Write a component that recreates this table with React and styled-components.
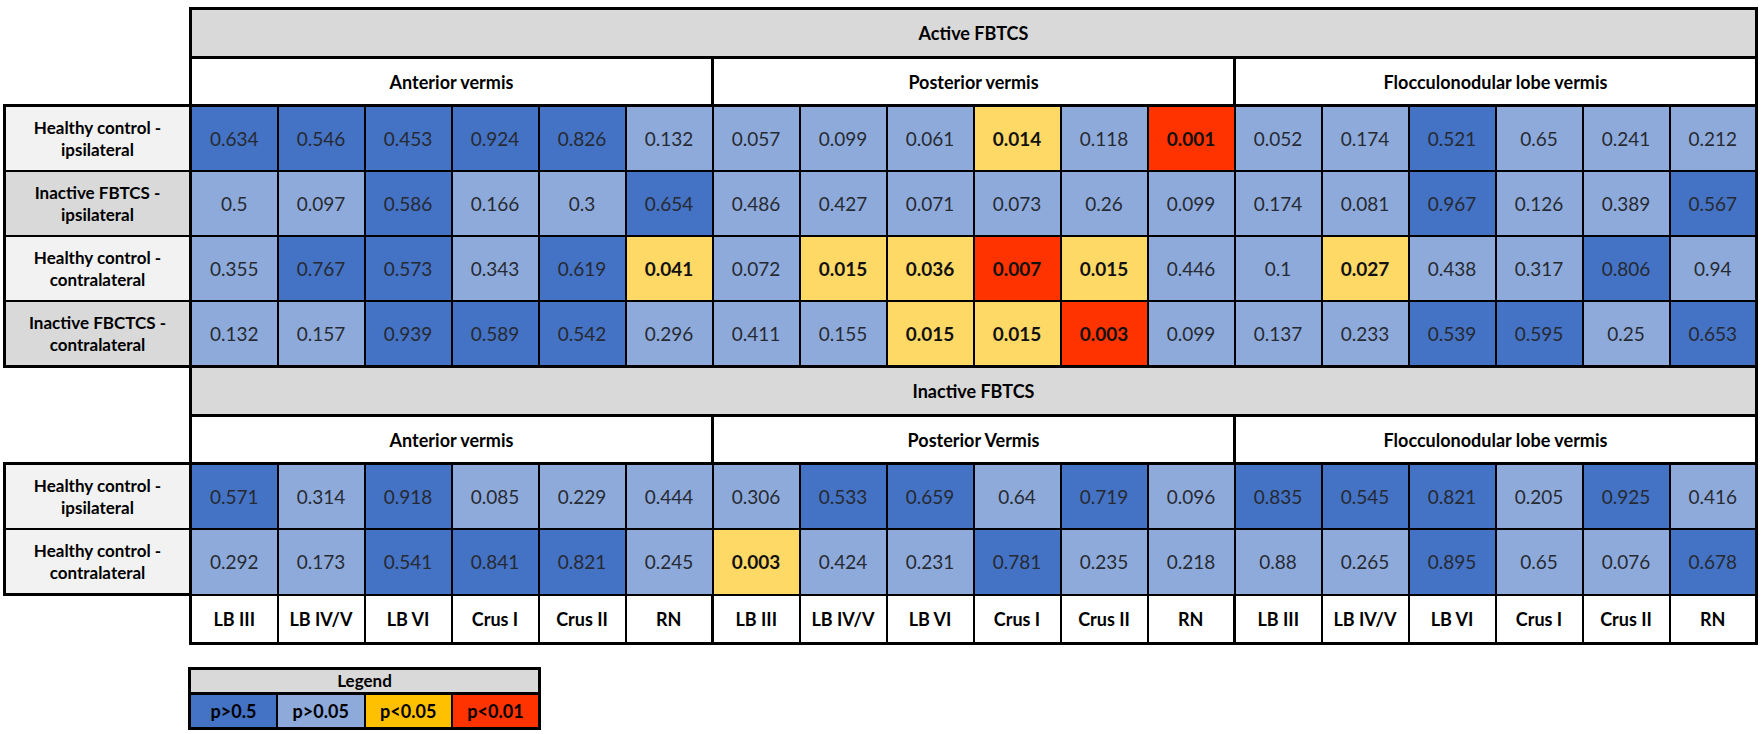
import React from "react";
import styled, { createGlobalStyle, css } from "styled-components";

const Global = createGlobalStyle`
  html, body { margin: 0; padding: 0; background: #ffffff; }
  body { font-family: Lato, "Open Sans", "Liberation Sans", sans-serif; color: #000; }
`;

const COLORS = {
  D: "#4472c4",
  L: "#8eaadb",
  Y: "#ffd966",
  R: "#ff3300",
};

const THICK = "3px solid #000";
const THIN = "2px solid #000";

const Page = styled.div`
  padding: 7px 0 0 3px;
  display: flex;
  flex-direction: column;
  align-items: flex-start;
`;

const Grid = styled.table`
  border-collapse: collapse;
  table-layout: fixed;
  width: 1755px;
  font-size: 18px;
`;

const LabelCol = styled.col`
  width: 186px;
`;

const Corner = styled.td`
  border: none;
  padding: 0;
  background: transparent;
`;

const SectionTitle = styled.th`
  background: #d9d9d9;
  border: ${THICK};
  height: 46px;
  padding: 0;
  font-weight: 700;
  text-align: center;
  vertical-align: middle;
`;

const GroupTitle = styled.th`
  background: #ffffff;
  border: ${THICK};
  height: 45px;
  padding: 0;
  font-weight: 700;
  text-align: center;
  vertical-align: middle;
`;

const RowLabel = styled.th`
  background: ${(p) => (p.$dark ? "#d9d9d9" : "#f2f2f2")};
  border: ${THIN};
  border-left: ${THICK};
  border-right: ${THICK};
  ${(p) => p.$first && css`border-top: ${THICK};`}
  ${(p) => p.$last && css`border-bottom: ${THICK};`}
  height: 63px;
  padding: 0 4px;
  font-size: 17px;
  font-weight: 700;
  line-height: 22px;
  text-align: center;
  vertical-align: middle;
`;

const Cell = styled.td`
  background: ${(p) => COLORS[p.$level]};
  border: ${THIN};
  ${(p) => p.$edge && css`border-right: ${THICK};`}
  padding: 0;
  font-size: 19px;
  text-align: center;
  vertical-align: middle;
  font-weight: ${(p) => (p.$level === "Y" || p.$level === "R" ? 700 : 400)};
  color: ${(p) => (p.$level === "Y" || p.$level === "R" ? "#111" : "#262a33")};
`;

const ColLabel = styled.th`
  background: #ffffff;
  border: ${THIN};
  border-bottom: ${THICK};
  ${(p) => p.$groupStart && css`border-left: ${THICK};`}
  ${(p) => p.$edge && css`border-right: ${THICK};`}
  height: 46px;
  padding: 0;
  font-weight: 700;
  text-align: center;
  vertical-align: middle;
`;

const Legend = styled.table`
  margin: 22px 0 0 185px;
  border-collapse: collapse;
  table-layout: fixed;
  width: 353px;
  font-size: 18px;
`;

const LegendTitle = styled.th`
  background: #d9d9d9;
  border: ${THICK};
  height: 22px;
  padding: 0;
  font-size: 17px;
  font-weight: 700;
  line-height: 1;
  text-align: center;
`;

const LegendSwatch = styled.td`
  background: ${(p) => p.$bg};
  border: ${THIN};
  border-bottom: ${THICK};
  ${(p) => p.$first && css`border-left: ${THICK};`}
  ${(p) => p.$edge && css`border-right: ${THICK};`}
  height: 32px;
  padding: 0;
  font-weight: 700;
  text-align: center;
  vertical-align: middle;
`;

const parse = (s) =>
  s.split(/\s+/).filter(Boolean).map((t) => {
    const [v, l] = t.split(":");
    return { v, l };
  });

const GROUPS_A = ["Anterior vermis", "Posterior vermis", "Flocculonodular lobe vermis"];
const GROUPS_B = ["Anterior vermis", "Posterior Vermis", "Flocculonodular lobe vermis"];

const SECTIONS = [
  {
    title: "Active FBTCS",
    groups: GROUPS_A,
    rows: [
      {
        label: ["Healthy control -", "ipsilateral"],
        dark: false,
        cells: parse(
          "0.634:D 0.546:D 0.453:D 0.924:D 0.826:D 0.132:L 0.057:L 0.099:L 0.061:L 0.014:Y 0.118:L 0.001:R 0.052:L 0.174:L 0.521:D 0.65:L 0.241:L 0.212:L"
        ),
      },
      {
        label: ["Inactive FBTCS -", "ipsilateral"],
        dark: true,
        cells: parse(
          "0.5:L 0.097:L 0.586:D 0.166:L 0.3:L 0.654:D 0.486:L 0.427:L 0.071:L 0.073:L 0.26:L 0.099:L 0.174:L 0.081:L 0.967:D 0.126:L 0.389:L 0.567:D"
        ),
      },
      {
        label: ["Healthy control -", "contralateral"],
        dark: false,
        cells: parse(
          "0.355:L 0.767:D 0.573:D 0.343:L 0.619:D 0.041:Y 0.072:L 0.015:Y 0.036:Y 0.007:R 0.015:Y 0.446:L 0.1:L 0.027:Y 0.438:L 0.317:L 0.806:D 0.94:L"
        ),
      },
      {
        label: ["Inactive FBCTCS -", "contralateral"],
        dark: true,
        cells: parse(
          "0.132:L 0.157:L 0.939:D 0.589:D 0.542:D 0.296:L 0.411:L 0.155:L 0.015:Y 0.015:Y 0.003:R 0.099:L 0.137:L 0.233:L 0.539:D 0.595:D 0.25:L 0.653:D"
        ),
      },
    ],
  },
  {
    title: "Inactive FBTCS",
    groups: GROUPS_B,
    rows: [
      {
        label: ["Healthy control -", "ipsilateral"],
        dark: false,
        cells: parse(
          "0.571:D 0.314:L 0.918:D 0.085:L 0.229:L 0.444:L 0.306:L 0.533:D 0.659:D 0.64:L 0.719:D 0.096:L 0.835:D 0.545:D 0.821:D 0.205:L 0.925:D 0.416:L"
        ),
      },
      {
        label: ["Healthy control -", "contralateral"],
        dark: false,
        cells: parse(
          "0.292:L 0.173:L 0.541:D 0.841:D 0.821:D 0.245:L 0.003:Y 0.424:L 0.231:L 0.781:D 0.235:L 0.218:L 0.88:L 0.265:L 0.895:D 0.65:L 0.076:L 0.678:D"
        ),
      },
    ],
  },
];

const REGIONS = ["LB III", "LB IV/V", "LB VI", "Crus I", "Crus II", "RN"];
const COL_LABELS = [...REGIONS, ...REGIONS, ...REGIONS];

const LEGEND = [
  { text: "p>0.5", bg: "#4472c4" },
  { text: "p>0.05", bg: "#8eaadb" },
  { text: "p<0.05", bg: "#ffc000" },
  { text: "p<0.01", bg: "#ff3300" },
];

function Section({ section }) {
  const n = section.rows.length;
  return (
    <>
      <tr>
        <Corner />
        <SectionTitle colSpan={18}>{section.title}</SectionTitle>
      </tr>
      <tr>
        <Corner />
        {section.groups.map((g, i) => (
          <GroupTitle key={i} colSpan={6}>
            {g}
          </GroupTitle>
        ))}
      </tr>
      {section.rows.map((row, ri) => (
        <tr key={ri}>
          <RowLabel $dark={row.dark} $first={ri === 0} $last={ri === n - 1}>
            {row.label[0]}
            <br />
            {row.label[1]}
          </RowLabel>
          {row.cells.map((c, ci) => (
            <Cell key={ci} $level={c.l} $edge={ci === 17}>
              {c.v}
            </Cell>
          ))}
        </tr>
      ))}
    </>
  );
}

export default function App() {
  return (
    <>
      <Global />
      <Page>
        <Grid>
          <colgroup>
            <LabelCol />
            {COL_LABELS.map((_, i) => (
              <col key={i} />
            ))}
          </colgroup>
          <tbody>
            {SECTIONS.map((s, i) => (
              <Section key={i} section={s} />
            ))}
            <tr>
              <Corner />
              {COL_LABELS.map((c, i) => (
                <ColLabel key={i} $groupStart={i % 6 === 0} $edge={i === 17}>
                  {c}
                </ColLabel>
              ))}
            </tr>
          </tbody>
        </Grid>
        <Legend>
          <tbody>
            <tr>
              <LegendTitle colSpan={4}>Legend</LegendTitle>
            </tr>
            <tr>
              {LEGEND.map((l, i) => (
                <LegendSwatch key={i} $bg={l.bg} $first={i === 0} $edge={i === 3}>
                  {l.text}
                </LegendSwatch>
              ))}
            </tr>
          </tbody>
        </Legend>
      </Page>
    </>
  );
}
